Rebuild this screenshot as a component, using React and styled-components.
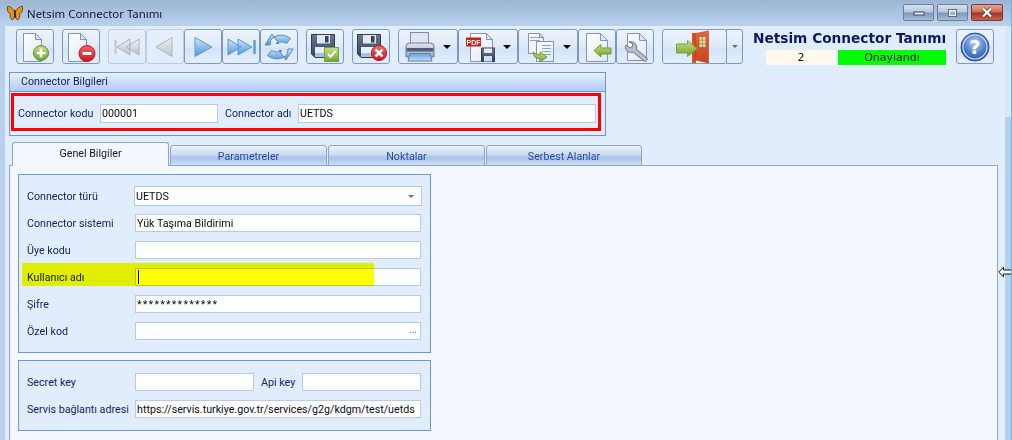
import React from "react";
import styled, { createGlobalStyle } from "styled-components";

const Global = createGlobalStyle`
  html, body { margin: 0; padding: 0; background: #b9d1ea; }
  * { box-sizing: border-box; }
`;

const UI_FONT = `Roboto, "Noto Sans", "Liberation Sans", sans-serif`;

const Window = styled.div`
  position: relative;
  width: 1012px;
  height: 440px;
  overflow: hidden;
  display: flex;
  flex-direction: column;
  padding: 0 0 0 5px;
  background: #b9d1ea;
  border-right: 1px solid #4fc0ea;
  font: 10.7px ${UI_FONT};
  color: #14246e;
`;

const TitleBar = styled.div`
  flex: none;
  height: 26px;
  margin: 0 0 0 -5px;
  padding: 0 8px 0 7px;
  display: flex;
  align-items: center;
  background: linear-gradient(#9cb5d3, #b9d2ee);
`;

const AppTitle = styled.div`
  margin-left: 4px;
  font: 11.4px "Noto Sans", sans-serif;
  color: #1a1030;
  flex: 1;
`;

const WindowControls = styled.div`
  display: flex;
  gap: 3px;
  margin-top: -1px;
`;

const WinButton = styled.div`
  width: ${p => (p.$close ? 32 : 31)}px;
  height: 17px;
  border: 1px solid ${p => (p.$close ? "#7a3a38" : "#6c7f98")};
  border-radius: 2px;
  display: flex;
  align-items: center;
  justify-content: center;
  background: ${p =>
    p.$close
      ? "linear-gradient(#e7a595, #cf6a58 48%, #a92d22 52%, #c2645a)"
      : "linear-gradient(#d5e2f1, #b4c7de 48%, #7e95b3 52%, #a6bcd6)"};
`;

const Body = styled.div`
  flex: 1;
  min-height: 0;
  display: flex;
`;

const Client = styled.div`
  flex: 1;
  min-width: 0;
  background: #e1edfd;
  display: flex;
  flex-direction: column;
`;

const ScrollTrack = styled.div`
  flex: none;
  width: 6px;
  background: #b7cfe9;
`;

const ScrollThumb = styled.div`
  height: 91px;
  background: #dbe7f6;
`;

const Toolbar = styled.div`
  flex: none;
  height: 46px;
  padding: 3px 11px 0;
  display: flex;
  align-items: flex-start;
  gap: 8px;
`;

const ButtonRun = styled.div`
  display: flex;
`;

const ToolButton = styled.div`
  flex: none;
  width: ${p => p.$w || 38}px;
  height: 35px;
  padding-right: ${p => p.$pad || 0}px;
  display: flex;
  align-items: center;
  justify-content: ${p => (p.$pad ? "flex-start" : "center")};
  padding-left: ${p => (p.$pad ? 4 : 0)}px;
  position: relative;
  border: 1px solid ${p => (p.$off ? "#bccce4" : "#7e98c6")};
  border-radius: 3px;
  background: ${p =>
    p.$off
      ? "linear-gradient(#e7effb, #e2ecfa)"
      : "linear-gradient(#eef4fd, #dfe9f9 50%, #d5e3f7 55%, #e3edfc)"};
`;

const MenuArrow = styled.span`
  position: absolute;
  right: 6px;
  top: 15px;
  border-left: 4px solid transparent;
  border-right: 4px solid transparent;
  border-top: 4px solid #0c0c14;
`;

const CaretPart = styled.div`
  width: 17px;
  height: 35px;
  margin-left: -1px;
  border: 1px solid #7e98c6;
  border-radius: 0 3px 3px 0;
  background: linear-gradient(#eef4fd, #dfe9f9 50%, #d5e3f7 55%, #e3edfc);
  display: flex;
  align-items: center;
  justify-content: center;
  &::after {
    content: "";
    border-left: 3px solid transparent;
    border-right: 3px solid transparent;
    border-top: 3px solid #56709c;
  }
`;

const FormTitleBlock = styled.div`
  width: 193px;
  margin-left: auto;
  margin-right: 2px;
  display: flex;
  flex-direction: column;
`;

const FormTitle = styled.div`
  font: bold 13.7px/18px "DejaVu Sans", sans-serif;
  color: #0c1a66;
  white-space: nowrap;
  text-align: center;
`;

const StatusRow = styled.div`
  display: flex;
  gap: 2px;
  margin-top: 3px;
  padding-left: 13px;
  height: 15px;
  text-align: center;
  color: #10140a;
  font: 11px/15px "DejaVu Sans", sans-serif;
`;

const StatusNumber = styled.div`
  width: 70px;
  background: #fff8ee;
`;

const StatusLabel = styled.div`
  flex: 1;
  background: #00ff00;
`;

const Content = styled.div`
  flex: 1;
  min-height: 0;
  padding-left: 4px;
  padding-right: 7px;
`;

const InfoCard = styled.section`
  width: 597px;
  border: 1px solid #6f96d0;
`;

const InfoHeader = styled.div`
  height: 19px;
  padding-left: 11px;
  line-height: 18px;
  border-bottom: 1px solid #6f96d0;
  background: linear-gradient(#e8f2fe, #aecbf6);
`;

const InfoBody = styled.div`
  position: relative;
  height: 43px;
  padding: 12px 9px 0 8px;
  display: flex;
  align-items: flex-start;
`;

const RedFrame = styled.div`
  position: absolute;
  left: 1px;
  top: 1px;
  width: 590px;
  height: 38px;
  border: 3px solid #ff0000;
  pointer-events: none;
`;

const InlineLabel = styled.label`
  line-height: 19px;
  white-space: nowrap;
  width: ${p => p.$w}px;
  padding-left: ${p => p.$inset || 0}px;
  flex: none;
`;

const Field = styled.div`
  position: relative;
  height: ${p => p.$h || 18}px;
  width: ${p => (p.$w ? `${p.$w}px` : "auto")};
  flex: ${p => (p.$w ? "none" : 1)};
  min-width: 0;
  padding: 0 1px;
  display: flex;
  align-items: center;
  justify-content: ${p => (p.$end ? "flex-end" : "flex-start")};
  background: #fff;
  border: 1px solid #b6cbe6;
  color: #0a0a14;
  white-space: nowrap;
  overflow: hidden;
  letter-spacing: ${p => (p.$secret ? "1.2px" : "normal")};
`;

const TextCaret = styled.span`
  width: 1px;
  height: 14px;
  background: #000;
  margin-left: 1px;
`;

const TabStrip = styled.div`
  margin-top: 6px;
  height: 24px;
  padding-left: 3px;
  display: flex;
  align-items: flex-end;
  gap: 1px;
  position: relative;
  z-index: 1;
`;

const Tab = styled.div`
  width: ${p => p.$w}px;
  height: ${p => (p.$active ? 24 : 21)}px;
  border: 1px solid #8ea6cc;
  border-bottom: ${p => (p.$active ? "none" : "1px solid #8ea6cc")};
  border-radius: 3px 3px 0 0;
  text-align: center;
  line-height: 22px;
  color: ${p => (p.$active ? "#101828" : "#2b4a9c")};
  background: ${p =>
    p.$active
      ? "#f3f7ff"
      : "linear-gradient(#edf3fc, #c9daf3 45%, #a9c3ea 62%, #cfdef5)"};
`;

const TabPanel = styled.div`
  margin-top: -1px;
  width: 989px;
  height: 300px;
  padding: 8px 0 0 8px;
  background: #f3f7ff;
  border: 1px solid #93a8cb;
`;

const FormGroup = styled.section`
  position: relative;
  width: 413px;
  height: ${p => p.$h}px;
  margin-bottom: 7px;
  padding: ${p => p.$top}px 9px 0 8px;
  background: #e1edfd;
  border: 1px solid #6f99d5;
  display: flex;
  flex-direction: column;
  gap: 9px;
`;

const FormRow = styled.div`
  display: flex;
  align-items: center;
  height: ${p => p.$h || 18}px;
  margin-bottom: ${p => p.$mb || 0}px;
`;

const RowLabel = styled.label`
  flex: none;
  width: ${p => p.$w || 108}px;
  padding-left: ${p => p.$inset || 0}px;
  white-space: nowrap;
`;

const ComboField = styled(Field)`
  margin-left: -1px;
  margin-right: -1px;
  justify-content: space-between;
  &::after {
    content: "";
    margin-right: 6px;
    border-left: 3px solid transparent;
    border-right: 3px solid transparent;
    border-top: 3px solid #5a74a2;
  }
`;

const Ellipsis = styled.span`
  color: #5a74a2;
  font-size: 10px;
  margin: -3px 2px 0 0;
`;

const Highlighter = styled.div`
  position: absolute;
  left: 3px;
  top: 88px;
  width: 352px;
  height: 23px;
  background: #ffff00;
  mix-blend-mode: multiply;
  pointer-events: none;
`;

const ResizeCursor = styled.svg`
  position: absolute;
  left: 998px;
  top: 266px;
`;

const GradientStore = styled.svg`
  position: absolute;
  width: 0;
  height: 0;
`;

const Gradients = () => (
  <GradientStore aria-hidden="true">
    <defs>
      <linearGradient id="page" x1="0" y1="0" x2="1" y2="1">
        <stop offset="0" stopColor="#fff" />
        <stop offset="1" stopColor="#dfe8f5" />
      </linearGradient>
      <linearGradient id="blueArrow" x1="0" y1="0" x2="0" y2="1">
        <stop offset="0" stopColor="#d2e6fa" />
        <stop offset="1" stopColor="#4f97d8" />
      </linearGradient>
      <linearGradient id="greyArrow" x1="0" y1="0" x2="0" y2="1">
        <stop offset="0" stopColor="#eef1f4" />
        <stop offset="1" stopColor="#bcc4cc" />
      </linearGradient>
      <linearGradient id="green" x1="0" y1="0" x2="0" y2="1">
        <stop offset="0" stopColor="#c7e083" />
        <stop offset="1" stopColor="#6da32e" />
      </linearGradient>
      <linearGradient id="red" x1="0" y1="0" x2="0" y2="1">
        <stop offset="0" stopColor="#f06a6a" />
        <stop offset="1" stopColor="#d40f1a" />
      </linearGradient>
      <linearGradient id="slate" x1="0" y1="0" x2="0" y2="1">
        <stop offset="0" stopColor="#69778f" />
        <stop offset="1" stopColor="#33415c" />
      </linearGradient>
      <linearGradient id="door" x1="0" y1="0" x2="0" y2="1">
        <stop offset="0" stopColor="#e8663a" />
        <stop offset="1" stopColor="#c8451c" />
      </linearGradient>
      <linearGradient id="printerBody" x1="0" y1="0" x2="0" y2="1">
        <stop offset="0" stopColor="#e3e8f0" />
        <stop offset="1" stopColor="#97a5bc" />
      </linearGradient>
      <linearGradient id="printerTray" x1="0" y1="0" x2="0" y2="1">
        <stop offset="0" stopColor="#5ba3dc" />
        <stop offset="1" stopColor="#c4e0f6" />
      </linearGradient>
      <radialGradient id="helpOrb" cx="0.5" cy="0.35" r="0.7">
        <stop offset="0" stopColor="#b7d2f2" />
        <stop offset="0.55" stopColor="#4f7fca" />
        <stop offset="1" stopColor="#1f47a0" />
      </radialGradient>
    </defs>
  </GradientStore>
);

const PageShape = ({ x = 4, y = 2, w = 18, h = 28, fold = 6 }) => (
  <>
    <path
      d={`M${x + 0.5} ${y + 0.5}h${w - fold}l${fold} ${fold}v${h - fold}h-${w}z`}
      fill="url(#page)"
      stroke="#8295b8"
    />
    <path
      d={`M${x + w - fold + 0.5} ${y + 0.5}v${fold}h${fold}z`}
      fill="#dfe6f1"
      stroke="#8295b8"
    />
  </>
);

const Glyph = ({ children, size = 32 }) => (
  <svg width={size} height={size} viewBox={`0 0 ${size} ${size}`}>
    {children}
  </svg>
);

const NewIcon = () => (
  <Glyph>
    <PageShape />
    <circle cx="22" cy="22" r="7.5" fill="url(#green)" stroke="#5d8f2a" />
    <path d="M22 17.5v9M17.5 22h9" stroke="#fff" strokeWidth="2.6" />
  </Glyph>
);

const RemoveIcon = () => (
  <Glyph>
    <PageShape x={3} />
    <circle cx="22" cy="22.5" r="8" fill="url(#red)" stroke="#c01620" />
    <path d="M17.5 22.5h9" stroke="#fff" strokeWidth="3" />
  </Glyph>
);

const FirstIcon = () => (
  <Glyph>
    <path d="M4.5 9v14" stroke="#c6ccd4" strokeWidth="2.4" />
    <path d="M6 16 19 8v16zM15 16 28 8v16z" fill="url(#greyArrow)" stroke="#aab3be" />
  </Glyph>
);

const PrevIcon = () => (
  <Glyph>
    <path d="M7 16 23 6.5v19z" fill="url(#greyArrow)" stroke="#aab3be" />
  </Glyph>
);

const NextIcon = () => (
  <Glyph>
    <path d="M8 6.5 25 16 8 25.5z" fill="url(#blueArrow)" stroke="#5f98cf" />
  </Glyph>
);

const LastIcon = () => (
  <Glyph>
    <path d="M3 8 16 16 3 24zM13 8 27 16 13 24z" fill="url(#blueArrow)" stroke="#5f98cf" />
    <path d="M29.5 9v14" stroke="#5f98cf" strokeWidth="2.4" />
  </Glyph>
);

const RefreshIcon = () => (
  <Glyph>
    <path
      d="M2 14 9 3 16 12.5H13C15 10.5 20 10.5 23.5 12.5L27.5 7.5C21 2.5 12 3 7.5 9.5L7 14Z"
      fill="url(#blueArrow)"
      stroke="#4d8bc8"
      strokeLinejoin="round"
    />
    <path
      d="M30 18 23 29 16 19.5H19C17 21.5 12 21.5 8.5 19.5L4.5 24.5C11 29.5 20 29 24.5 22.5L25 18Z"
      fill="url(#blueArrow)"
      stroke="#4d8bc8"
      strokeLinejoin="round"
    />
  </Glyph>
);

const Floppy = () => (
  <>
    <path d="M2.5 3.5h23v23H6l-3.5-3.5z" fill="url(#slate)" stroke="#2f3c55" />
    <rect x="8" y="4" width="13" height="8.5" fill="#e4e8ee" />
    <rect x="16" y="5" width="3.5" height="6.5" fill="#33415c" />
    <rect x="6" y="16" width="16" height="10" fill="#e8eef7" />
    <rect x="6" y="22" width="16" height="4" fill="#9fc3e6" />
  </>
);

const SaveIcon = () => (
  <Glyph>
    <Floppy />
    <rect x="15.5" y="16.5" width="14" height="14" fill="url(#green)" stroke="#77a03a" />
    <path d="M19 23l2.5 3 5-6" fill="none" stroke="#fff" strokeWidth="2" />
  </Glyph>
);

const CancelIcon = () => (
  <Glyph>
    <Floppy />
    <circle cx="24" cy="22" r="7.6" fill="url(#red)" stroke="#c01620" />
    <path d="M20.5 18.5l7 7M27.5 18.5l-7 7" stroke="#fff" strokeWidth="2.6" />
  </Glyph>
);

const PrintIcon = () => (
  <Glyph>
    <rect x="7.5" y="1.5" width="18" height="13" fill="#dfe5ef" stroke="#7f8da5" />
    <path d="M3 15q0-3 4-3h20q4 0 4 3v11H3z" fill="url(#printerBody)" stroke="#6f7f9a" />
    <rect x="3.5" y="17" width="27" height="3.5" fill="#4e5f7c" />
    <path d="M7 22.5h20l2 7.5H5z" fill="url(#printerTray)" stroke="#6f7f9a" />
  </Glyph>
);

const PdfIcon = () => (
  <Glyph>
    <PageShape x={7} y={2} w={22} h={28} />
    <rect x="3" y="6.5" width="15" height="9" fill="#c8241c" />
    <text x="10.5" y="13.6" textAnchor="middle" fontFamily="Liberation Sans" fontWeight="700" fontSize="7" fill="#fff">
      PDF
    </text>
    <path d="M18.5 17h13.5v13.5H18.5z" fill="url(#slate)" stroke="#2f3c55" />
    <rect x="21" y="17.5" width="8" height="4.5" fill="#e4e8ee" />
    <rect x="21" y="25" width="8" height="5.5" fill="#cfe0f2" />
  </Glyph>
);

const TextLines = ({ x, y, w, n }) => (
  <path
    d={Array.from({ length: n }, (_, i) => `M${x} ${y + i * 3 + 0.5}h${w}`).join("")}
    stroke="#8aa4cc"
  />
);

const CopyIcon = () => (
  <Glyph>
    <PageShape x={5} y={2} w={15} h={20} fold={4} />
    <TextLines x={7} y={6} w={10} n={2} />
    <rect x="13.5" y="10.5" width="17" height="20" fill="url(#page)" stroke="#8295b8" />
    <TextLines x={19} y={14} w={9} n={4} />
    <path d="M10 21q2 3 7 3v-3l7 5-7 5v-3q-6 0-7-7z" fill="url(#green)" stroke="#6f9b34" />
  </Glyph>
);

const ImportIcon = () => (
  <Glyph>
    <PageShape x={5} y={2} w={21} h={28} fold={7} />
    <path d="M13 19.5l7-6V17h10v6H20v3z" fill="url(#green)" stroke="#6f9b34" />
  </Glyph>
);

const ToolsIcon = () => (
  <Glyph>
    <PageShape x={8} y={2} w={19} h={27} fold={7} />
    <path
      d="M10 11c3-1 6 0 7 3 1 1 1 3 0 4l11 9c1 2-1 4-3 3L14 21c-3 1-6 0-7-3-1-2-1-3 0-4l4 3 3-2-1-3z"
      fill="#b8c0cc"
      stroke="#68738a"
    />
  </Glyph>
);

const ExitIcon = () => (
  <Glyph size={40}>
    <path d="M17 6h4v30h-4z" fill="#d4521f" />
    <path d="M20.5 6.5 33.5 4v32l-13-3z" fill="url(#door)" stroke="#b83e16" strokeWidth="0.6" />
    <rect x="24" y="9.5" width="7" height="11" fill="#e8d59a" stroke="#8f6a2a" strokeWidth="0.7" />
    <path d="M27.5 9.5v11M24 13.2h7M24 16.8h7" stroke="#8f6a2a" strokeWidth="0.5" />
    <path d="M1.5 17h11v-3.5l9.5 8-9.5 8V26h-11z" fill="url(#green)" stroke="#7aa53b" />
  </Glyph>
);

const HelpIcon = () => (
  <Glyph>
    <circle cx="16" cy="16" r="14" fill="url(#helpOrb)" stroke="#2b4d9e" />
    <circle cx="16" cy="16" r="12" fill="none" stroke="#c9dcf5" strokeWidth="1.2" />
    <text x="16" y="23" textAnchor="middle" fontFamily="DejaVu Sans" fontWeight="700" fontSize="20" fill="#fff">
      ?
    </text>
  </Glyph>
);

const Butterfly = () => (
  <svg width="16" height="16" viewBox="0 0 16 16">
    <path d="M7.5 7C6 3 3 1 .5 1.5 0 5 1 8 3.5 9 2.5 11 3.5 14 5.5 15 7 14 8 11 7.5 7z" fill="#ef8f1c" stroke="#5a3210" strokeWidth="0.8" />
    <path d="M8.5 7C10 3 13 1 15.5 1.5 16 5 15 8 12.5 9 13.5 11 12.5 14 10.5 15 9 14 8 11 8.5 7z" fill="#ef8f1c" stroke="#5a3210" strokeWidth="0.8" />
    <path d="M8 5v8" stroke="#2c1a08" strokeWidth="1.4" />
  </svg>
);

const MinGlyph = () => <svg width="12" height="6"><rect x="1" y="2" width="10" height="3" fill="#e8eef6" stroke="#3c4c66" /></svg>;
const MaxGlyph = () => <svg width="12" height="10"><rect x="1.5" y="1.5" width="8" height="7" fill="none" stroke="#3c4c66" strokeWidth="1" /><rect x="2.5" y="2.5" width="6" height="5" fill="none" stroke="#eef3f9" strokeWidth="1.4" /><rect x="3.8" y="4" width="3.4" height="2" fill="#9fb3cc" /></svg>;
const CloseGlyph = () => <svg width="14" height="11"><path d="M3 1.5l8 8M11 1.5l-8 8" stroke="#5a2a28" strokeWidth="3.6" /><path d="M3 1.5l8 8M11 1.5l-8 8" stroke="#fff" strokeWidth="2.4" /></svg>;

export default function App() {
  return (
    <Window>
      <Global />
      <Gradients />
      <TitleBar>
        <Butterfly />
        <AppTitle>Netsim Connector Tanımı</AppTitle>
        <WindowControls>
          <WinButton><MinGlyph /></WinButton>
          <WinButton><MaxGlyph /></WinButton>
          <WinButton $close><CloseGlyph /></WinButton>
        </WindowControls>
      </TitleBar>
      <Body>
        <Client>
          <Toolbar>
            <ToolButton><NewIcon /></ToolButton>
            <ToolButton><RemoveIcon /></ToolButton>
            <ButtonRun>
              <ToolButton $off><FirstIcon /></ToolButton>
              <ToolButton $off><PrevIcon /></ToolButton>
              <ToolButton><NextIcon /></ToolButton>
              <ToolButton><LastIcon /></ToolButton>
              <ToolButton><RefreshIcon /></ToolButton>
            </ButtonRun>
            <ToolButton><SaveIcon /></ToolButton>
            <ToolButton><CancelIcon /></ToolButton>
            <ButtonRun>
              <ToolButton $w={60} $pad={20}><PrintIcon /><MenuArrow /></ToolButton>
              <ToolButton $w={60} $pad={20}><PdfIcon /><MenuArrow /></ToolButton>
              <ToolButton $w={60} $pad={20}><CopyIcon /><MenuArrow /></ToolButton>
              <ToolButton><ImportIcon /></ToolButton>
              <ToolButton><ToolsIcon /></ToolButton>
            </ButtonRun>
            <ButtonRun>
              <ToolButton $w={65}><ExitIcon /></ToolButton>
              <CaretPart />
            </ButtonRun>
            <FormTitleBlock>
              <FormTitle>Netsim Connector Tanımı</FormTitle>
              <StatusRow>
                <StatusNumber>2</StatusNumber>
                <StatusLabel>Onaylandı</StatusLabel>
              </StatusRow>
            </FormTitleBlock>
            <ToolButton><HelpIcon /></ToolButton>
          </Toolbar>
          <Content>
            <InfoCard>
              <InfoHeader>Connector Bilgileri</InfoHeader>
              <InfoBody>
                <InlineLabel $w={82}>Connector kodu</InlineLabel>
                <Field $w={118} $h={19}>000001</Field>
                <InlineLabel $w={80} $inset={7}>Connector adı</InlineLabel>
                <Field $h={19}>UETDS</Field>
                <RedFrame />
              </InfoBody>
            </InfoCard>
            <TabStrip>
              <Tab $active $w={157}>Genel Bilgiler</Tab>
              <Tab $w={157}>Parametreler</Tab>
              <Tab $w={157}>Noktalar</Tab>
              <Tab $w={156}>Serbest Alanlar</Tab>
            </TabStrip>
            <TabPanel>
              <FormGroup $h={179} $top={11}>
                <FormRow $h={20} $mb={-1}>
                  <RowLabel>Connector türü</RowLabel>
                  <ComboField $h={20}>UETDS</ComboField>
                </FormRow>
                <FormRow>
                  <RowLabel>Connector sistemi</RowLabel>
                  <Field>Yük Taşıma Bildirimi</Field>
                </FormRow>
                <FormRow>
                  <RowLabel>Üye kodu</RowLabel>
                  <Field />
                </FormRow>
                <FormRow>
                  <RowLabel>Kullanıcı adı</RowLabel>
                  <Field><TextCaret /></Field>
                </FormRow>
                <FormRow>
                  <RowLabel>Şifre</RowLabel>
                  <Field $secret>**************</Field>
                </FormRow>
                <FormRow>
                  <RowLabel>Özel kod</RowLabel>
                  <Field $end>
                    <Ellipsis>...</Ellipsis>
                  </Field>
                </FormRow>
                <Highlighter />
              </FormGroup>
              <FormGroup $h={71} $top={12}>
                <FormRow>
                  <RowLabel>Secret key</RowLabel>
                  <Field $w={119} />
                  <RowLabel $w={48} $inset={7}>Api key</RowLabel>
                  <Field />
                </FormRow>
                <FormRow>
                  <RowLabel>Servis bağlantı adresi</RowLabel>
                  <Field>https://servis.turkiye.gov.tr/services/g2g/kdgm/test/uetds</Field>
                </FormRow>
              </FormGroup>
            </TabPanel>
          </Content>
        </Client>
        <ScrollTrack>
          <ScrollThumb />
        </ScrollTrack>
      </Body>
      <ResizeCursor width="14" height="12" viewBox="0 0 14 12">
        <path d="M.7 6 5.5 1.2V4H14v4H5.5v2.8z" fill="#fff" stroke="#111" strokeWidth="1" />
      </ResizeCursor>
    </Window>
  );
}
